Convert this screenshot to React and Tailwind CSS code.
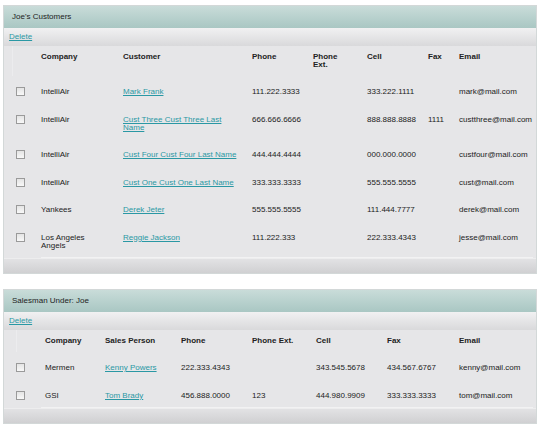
import React from "react";

const FONT = { fontFamily: '"Liberation Sans", Arial, sans-serif' };

function Box() {
  return (
    <div className="w-[9px] h-[9px] border border-[#9a9a9a] bg-gradient-to-b from-[#e4e4e4] to-[#f8f8f8] -mt-[1px] ml-[12px]" />
  );
}

function Link({ children }) {
  return <span className="text-[#2a98a4] underline">{children}</span>;
}

function Panel({ title, cols, pads, headers, rows, className }) {
  return (
    <div className={"mx-[3px] border border-[#d3d8d8] " + (className || "")}>
      <div className="h-[22px] flex items-center pl-[8px] bg-gradient-to-b from-[#c9dcd9] to-[#a9c7c3] text-[8px] text-[#222]">
        {title}
      </div>
      <div className="h-[18px] flex items-center pl-[5px] bg-gradient-to-b from-[#f1f1f2] to-[#d9d9db] text-[8px]">
        <Link>Delete</Link>
      </div>
      <div className="bg-[#e6e6e8]">
        <div className="grid" style={{ gridTemplateColumns: cols }}>
          <div className="border-r border-[#ececee] mr-[28px]" />
          {headers.map((h, i) => (
            <div
              key={i}
              className={"pt-[7px] pb-[7px] text-[8px] leading-[8px] font-bold text-[#222] " + pads[i]}
            >
              {h}
            </div>
          ))}
          {rows.map((r, ri) => (
            <React.Fragment key={ri}>
              <div className="pt-[12px] pb-[7.5px]">
                <Box />
              </div>
              {r.map((c, ci) => (
                <div
                  key={ci}
                  className={"pt-[12px] pb-[7.5px] text-[8px] leading-[8px] text-[#222] " + pads[ci]}
                >
                  {ci === 1 ? <Link>{c}</Link> : c}
                </div>
              ))}
            </React.Fragment>
          ))}
        </div>
        <div className="h-[1px] ml-[37px] mr-[3px] bg-[#f2f2f3]" />
      </div>
      <div className="h-[15px] bg-gradient-to-b from-[#e2e2e4] to-[#d0d0d2] border-t border-[#ededee]" />
    </div>
  );
}

export default function App() {
  const rows1 = [
    ["IntelliAir", "Mark Frank", "111.222.3333", "", "333.222.1111", "", "mark@mail.com"],
    ["IntelliAir", "Cust Three Cust Three Last Name", "666.666.6666", "", "888.888.8888", "1111", "custthree@mail.com"],
    ["IntelliAir", "Cust Four Cust Four Last Name", "444.444.4444", "", "000.000.0000", "", "custfour@mail.com"],
    ["IntelliAir", "Cust One Cust One Last Name", "333.333.3333", "", "555.555.5555", "", "cust@mail.com"],
    ["Yankees", "Derek Jeter", "555.555.5555", "", "111.444.7777", "", "derek@mail.com"],
    ["Los Angeles Angels", "Reggie Jackson", "111.222.333", "", "222.333.4343", "", "jesse@mail.com"],
  ];
  const rows2 = [
    ["Mermen", "Kenny Powers", "222.333.4343", "", "343.545.5678", "434.567.6767", "kenny@mail.com"],
    ["GSI", "Tom Brady", "456.888.0000", "123", "444.980.9909", "333.333.3333", "tom@mail.com"],
  ];
  return (
    <div className="w-[540px] h-[436px] bg-white pt-[5px] overflow-hidden" style={FONT}>
      <Panel
        title="Joe's Customers"
        cols="37px 82px 129px 61px 54px 61px 31px 1fr"
        pads={["pr-[22px]", "pr-[12px]", "pr-[4px]", "pr-[16px]", "pr-[4px]", "pr-[2px]", "pr-[0px]"]}
        headers={["Company", "Customer", "Phone", "Phone Ext.", "Cell", "Fax", "Email"]}
        rows={rows1}
      />
      <Panel
        className="mt-[15px]"
        title="Salesman Under: Joe"
        cols="41px 60px 76px 71px 64px 71px 72px 1fr"
        pads={["pr-[4px]", "pr-[4px]", "pr-[4px]", "pr-[4px]", "pr-[4px]", "pr-[4px]", "pr-[0px]"]}
        headers={["Company", "Sales Person", "Phone", "Phone Ext.", "Cell", "Fax", "Email"]}
        rows={rows2}
      />
    </div>
  );
}
